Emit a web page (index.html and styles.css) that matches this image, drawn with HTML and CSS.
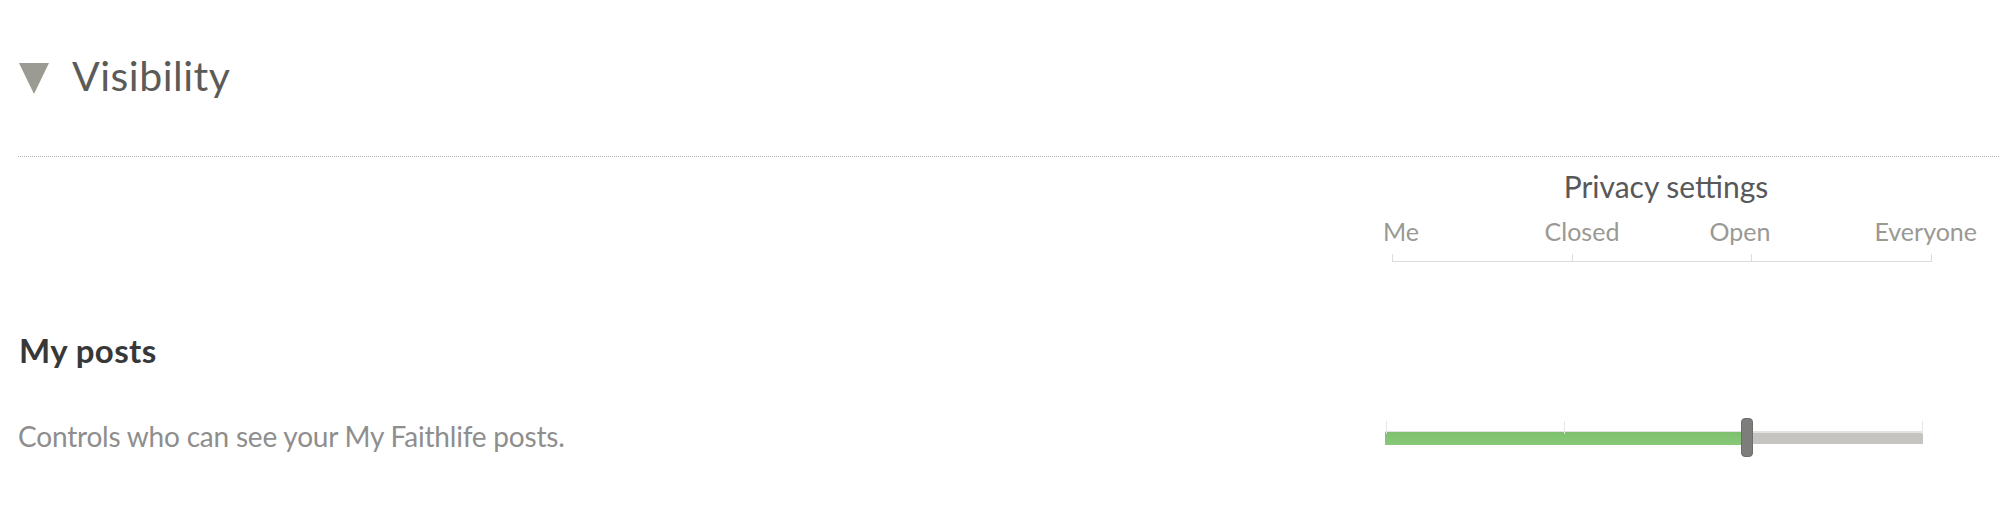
FILE: index.html
```html
<!DOCTYPE html>
<html lang="en">
<head>
    <meta charset="UTF-8">
    <meta name="viewport" content="width=device-width, initial-scale=1.0">
    <title>Visibility</title>
    <link rel="stylesheet" href="styles.css">
</head>
<body>
    <section class="panel">
        <h2 class="panel-title">
            <svg class="caret" width="30" height="31" viewBox="0 0 30 31">
                <polygon points="0,0 30,0 15,31" fill="#9b9a93"/>
            </svg>
            Visibility
        </h2>

        <div class="panel-body">
            <!-- scale header -->
            <div class="row">
                <div></div>
                <div class="scale">
                    <div class="scale-title">Privacy settings</div>
                    <div class="scale-labels">
                        <span class="lbl-first">Me</span>
                        <span>Closed</span>
                        <span>Open</span>
                        <span class="lbl-last">Everyone</span>
                    </div>
                    <div class="scale-ticks">
                        <div></div>
                        <div></div>
                        <div></div>
                    </div>
                </div>
            </div>

            <!-- settings -->
            <div class="row setting">
                <div class="setting-text">
                    <h3>My posts</h3>
                    <p>Controls who can see your My Faithlife posts.</p>
                </div>
                <div class="slider-cell">
                    <div class="slider">
                        <div class="slider-fill" style="width: 360px"></div>
                        <span class="slider-tick" style="left: 1px"></span>
                        <span class="slider-tick" style="left: 179px"></span>
                        <span class="slider-tick" style="left: 537px"></span>
                        <span class="slider-thumb" style="left: 358px"></span>
                    </div>
                </div>
            </div>
        </div>
    </section>
</body>
</html>
```

FILE: styles.css
```css
/* Reset */
* {
    margin: 0;
    padding: 0;
    box-sizing: border-box;
}

body {
    font-family: Lato, "Liberation Sans", sans-serif;
    background-color: #ffffff;
    width: 1999px;
}

/* Panel header */
.panel {
    padding-left: 18px;
}

.panel-title {
    display: flex;
    align-items: center;
    height: 48px;
    margin-top: 52px;
    font-size: 41px;
    line-height: 48px;
    letter-spacing: 0.5px;
    font-weight: normal;
    color: #5c5b58;
}

.caret {
    margin-left: 1px;
    margin-right: 23px;
    margin-top: 5px;
}

.panel-body {
    margin-top: 56px;
    border-top: 1px dotted #b3b3b3;
}

.row {
    display: grid;
    grid-template-columns: 1fr 594px;
    padding-right: 22px;
}

/* Privacy scale */
.scale {
    padding-top: 11px;
}

.scale-title {
    text-align: center;
    font-size: 30px;
    line-height: 36px;
    color: #58585a;
    padding-right: 28px;
}

.scale-labels {
    display: grid;
    grid-template-columns: 120px 158px 158px 158px;
    margin-top: 12px;
    font-size: 25px;
    line-height: 30px;
    color: #9a9993;
    text-align: center;
}

.scale-labels .lbl-first {
    text-align: left;
}

.scale-labels .lbl-last {
    text-align: right;
}

.scale-ticks {
    display: flex;
    width: 540px;
    height: 8px;
    margin-left: 9px;
    margin-top: 8px;
    border-right: 1px solid #dcdcdc;
}

.scale-ticks div {
    flex: 1;
    border-left: 1px solid #dcdcdc;
    border-bottom: 1px solid #dcdcdc;
}

/* Setting row */
.setting {
    margin-top: 70px;
    padding-bottom: 40px;
}

.setting-text h3 {
    font-size: 33px;
    line-height: 36px;
    letter-spacing: 0.4px;
    font-weight: bold;
    color: #383838;
    margin-left: 1px;
}

.setting-text p {
    margin-top: 51px;
    font-size: 28px;
    line-height: 34px;
    letter-spacing: -0.2px;
    color: #8e8e8e;
}

.slider-cell {
    display: flex;
    align-items: flex-end;
    padding-bottom: 9px;
}

.slider {
    position: relative;
    width: 538px;
    height: 13px;
    margin-left: 2px;
    background-color: #c5c4c1;
    box-shadow: inset 0 2px 0 #e2e2e0;
}

.slider-fill {
    height: 13px;
    margin-top: 1px;
    background: linear-gradient(#7dc06c, #88c97a);
}

.slider-tick {
    position: absolute;
    top: -10px;
    width: 1px;
    height: 13px;
    background-color: #e6e6e6;
}

.slider-thumb {
    position: absolute;
    top: -13px;
    width: 12px;
    height: 39px;
    margin-left: -2px;
    border-radius: 4px;
    background-color: #7d7d7c;
    border: 1px solid #6d6d6d;
}
```
